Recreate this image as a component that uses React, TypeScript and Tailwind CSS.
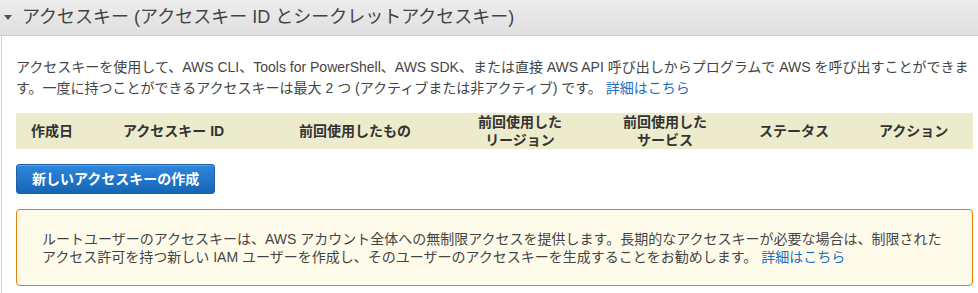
const font = { fontFamily: '"Liberation Sans", Arial, "Noto Sans CJK JP", sans-serif' };

type Col = { label: string[]; className: string };

const columns: Col[] = [
  { label: ['作成日'], className: 'w-[92px]' },
  { label: ['アクセスキー ID'], className: 'w-[176px]' },
  { label: ['前回使用したもの'], className: 'w-[179px]' },
  { label: ['前回使用した', 'リージョン'], className: 'w-[145px]' },
  { label: ['前回使用した', 'サービス'], className: 'w-[136px]' },
  { label: ['ステータス'], className: 'w-[120px]' },
  { label: ['アクション'], className: 'flex-1' },
];

export default function App() {
  return (
    <div className="w-[978px] h-[293px] bg-white text-[#444] overflow-hidden" style={font}>
      <div className="h-[36px] flex items-center border-b border-[#cfcfcf] bg-gradient-to-b from-[#ececec] to-[#e0e0e0]">
        <svg width="8" height="5" viewBox="0 0 8 5" className="ml-[4px] mt-[-1px]">
          <path d="M0 0h8L4 5z" fill="#555" />
        </svg>
        <h2 className="ml-[10px] text-[18px] text-[#444] leading-none mt-[-2px]">
          アクセスキー (アクセスキー ID とシークレットアクセスキー)
        </h2>
      </div>

      <div className="ml-[1px] border-l border-[#d2d2d2] pl-[14px] pr-[5px] pt-[21px] pb-[10px]">
        <p className="text-[14px] leading-[21px]">
          アクセスキーを使用して、AWS CLI、Tools for PowerShell、AWS SDK、または直接 AWS API 呼び出しからプログラムで AWS を呼び出すことができます。一度に持つことができるアクセスキーは最大 2 つ (アクティブまたは非アクティブ) です。{' '}
          <a className="text-[#1a6fc4]">詳細はこちら</a>
        </p>

        <div className="mt-[14px] h-[36px] flex items-center bg-[#ecebcc] text-[14px] font-bold text-[#333] leading-[18px]">
          {columns.map((c) => (
            <div key={c.label.join('')} className={`${c.className} pl-[15px]`}>
              <div className="inline-block text-center">
                {c.label.map((l) => (
                  <div key={l}>{l}</div>
                ))}
              </div>
            </div>
          ))}
        </div>

        <button className="mt-[15px] h-[30px] px-[15px] rounded-[3px] border border-[#1d5fa8] bg-gradient-to-b from-[#2f87dc] to-[#1565b5] text-white text-[14px] font-bold shadow-[inset_0_1px_0_rgba(255,255,255,0.2)]">
          新しいアクセスキーの作成
        </button>

        <div className="mt-[15px] border border-[#e4800f] rounded-[4px] bg-[#fffbea] pl-[25px] pr-[25px] pt-[20px] pb-[19px] text-[14px] leading-[18px] text-[#444]">
          ルートユーザーのアクセスキーは、AWS アカウント全体への無制限アクセスを提供します。長期的なアクセスキーが必要な場合は、制限されたアクセス許可を持つ新しい IAM ユーザーを作成し、そのユーザーのアクセスキーを生成することをお勧めします。{' '}
          <a className="text-[#1a6fc4]">詳細はこちら</a>
        </div>
      </div>
    </div>
  );
}
